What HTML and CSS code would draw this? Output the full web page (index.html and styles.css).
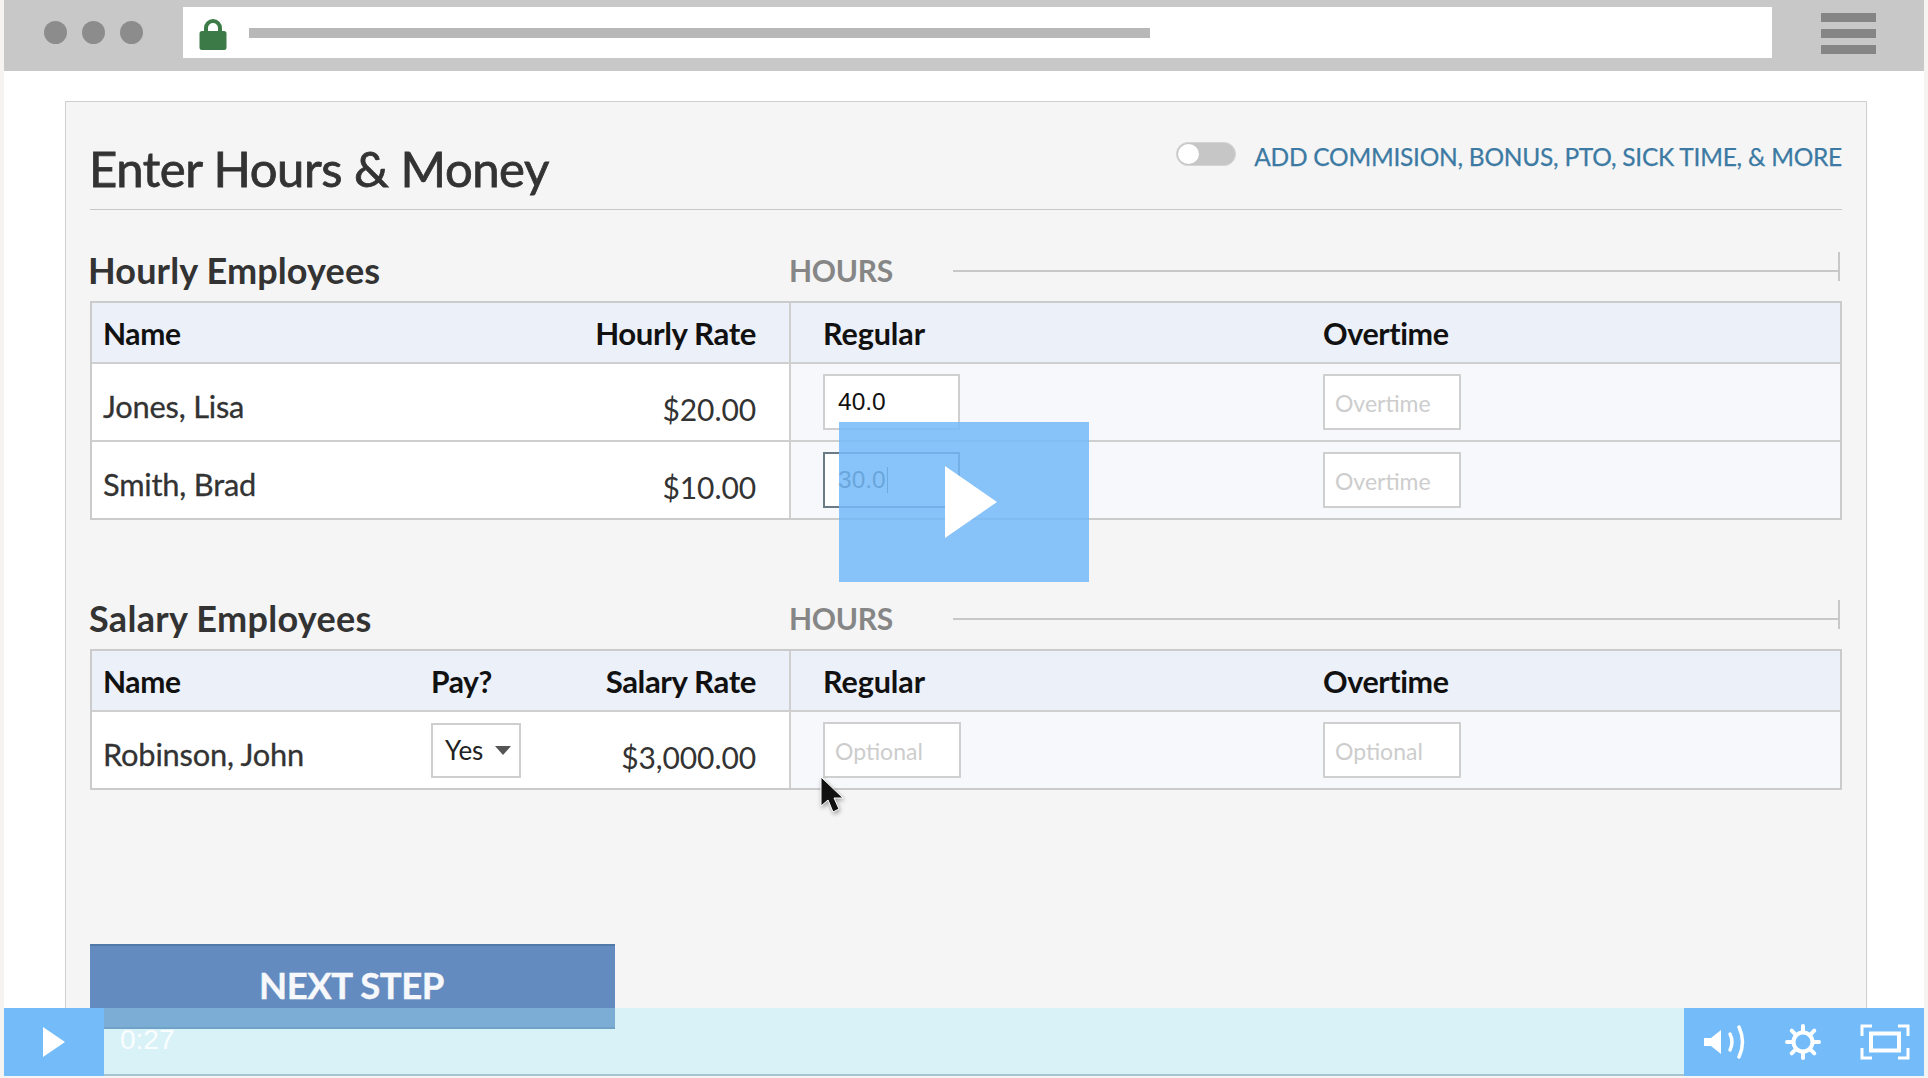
FILE: index.html
```html
<!DOCTYPE html>
<html lang="en">
<head>
<meta charset="utf-8">
<title>Enter Hours &amp; Money</title>
<link rel="stylesheet" href="styles.css">
</head>
<body>
<div class="page">
  <header class="chrome">
    <div class="dots"><span class="dot"></span><span class="dot"></span><span class="dot"></span></div>
    <div class="urlbar">
      <svg class="lock" viewBox="0 0 28 31" width="28" height="31"><path d="M7 14V9a7 7 0 0 1 14 0v5" fill="none" stroke="#3c7a47" stroke-width="4"/><rect x="0.5" y="12" width="27" height="19" rx="2.5" fill="#3c7a47"/></svg>
      <div class="urlline"></div>
    </div>
    <div class="burger"><span></span><span></span><span></span></div>
  </header>
  <main class="panel">
    <div class="titlerow">
      <h1 class="title">Enter Hours &amp; Money</h1>
      <div class="addons">
        <span class="toggle"><span class="knob"></span></span>
        <span class="addlink">ADD COMMISION, BONUS, PTO, SICK TIME, &amp; MORE</span>
      </div>
    </div>

    <section class="group group-hourly">
      <div class="grouphead">
        <h2 class="groupname">Hourly Employees</h2>
        <div class="hourslabel">HOURS</div>
        <div class="hoursline"></div>
      </div>
      <div class="table">
        <div class="row head">
          <div class="cell left hourly-left"><span>Name</span><span class="rate">Hourly Rate</span></div>
          <div class="cell right"><span class="colreg">Regular</span><span>Overtime</span></div>
        </div>
        <div class="row">
          <div class="cell left hourly-left"><span class="name">Jones, Lisa</span><span class="money">$20.00</span></div>
          <div class="cell right"><span class="colreg"><span class="input val">40.0</span></span><span class="input ph wide">Overtime</span></div>
        </div>
        <div class="row">
          <div class="cell left hourly-left"><span class="name">Smith, Brad</span><span class="money">$10.00</span></div>
          <div class="cell right"><span class="colreg"><span class="input val focus">30.0<i class="caret"></i></span></span><span class="input ph wide">Overtime</span></div>
        </div>
      </div>
    </section>

    <section class="group group-salary">
      <div class="grouphead">
        <h2 class="groupname">Salary Employees</h2>
        <div class="hourslabel">HOURS</div>
        <div class="hoursline"></div>
      </div>
      <div class="table">
        <div class="row head">
          <div class="cell left salary-left"><span>Name</span><span>Pay?</span><span class="end rate">Salary Rate</span></div>
          <div class="cell right"><span class="colreg">Regular</span><span>Overtime</span></div>
        </div>
        <div class="row">
          <div class="cell left salary-left"><span class="name">Robinson, John</span><span class="select">Yes<i class="arrow"></i></span><span class="money end">$3,000.00</span></div>
          <div class="cell right"><span class="colreg"><span class="input ph wide">Optional</span></span><span class="input ph wide">Optional</span></div>
        </div>
      </div>
    </section>

    <button class="next">NEXT STEP</button>
  </main>

  <svg class="cursor" viewBox="0 0 24 40" width="24" height="40"><path d="M1 1v29l7-6 5 12 6-3-5-11h9z" fill="#111" stroke="#fff" stroke-width="1"/></svg>

  <div class="bigplay"><svg viewBox="0 0 52 72" width="52" height="72"><path d="M0 0l52 36L0 72z" fill="#fff"/></svg></div>

  <div class="controls">
    <div class="ctl-play"><svg viewBox="0 0 22 30" width="22" height="30"><path d="M0 0l22 15L0 30z" fill="#fff"/></svg></div>
    <div class="ctl-bar"><span class="time">0:27</span></div>
    <div class="ctl-right">
      <svg viewBox="0 0 42 34" width="42" height="34"><path d="M0 13h7l10-8v24L7 21H0z" fill="#fff"/><path d="M26 9q4 8 0 16" fill="none" stroke="#fff" stroke-width="3.5" stroke-linecap="round"/><path d="M35 2q7 15 0 30" fill="none" stroke="#fff" stroke-width="3.5" stroke-linecap="round"/></svg>
      <svg viewBox="0 0 36 36" width="36" height="36"><g stroke="#fff" stroke-width="4" stroke-linecap="round"><path d="M18 2v5M18 29v5M2 18h5M29 18h5M6.7 6.7l3.5 3.5M25.8 25.8l3.5 3.5M6.7 29.3l3.5-3.5M25.8 10.2l3.5-3.5"/></g><circle cx="18" cy="18" r="9.5" fill="none" stroke="#fff" stroke-width="4"/></svg>
      <svg viewBox="0 0 50 36" width="50" height="36"><path d="M2 12V2h10M38 2h10v10M48 24v10H38M12 34H2V24" fill="none" stroke="#fff" stroke-width="3"/><rect x="11" y="9.500" width="28" height="17" fill="none" stroke="#fff" stroke-width="4"/></svg>
    </div>
  </div>
</div>
</body>
</html>
```

FILE: styles.css
```css
* { box-sizing: border-box; }
html, body { margin: 0; height: 100%; }
body { background: #f6f4f2; overflow: hidden; font-family: Lato, "Liberation Sans", sans-serif; color: #333; }
.page { position: relative; width: 1920px; height: 1076px; margin-left: 4px; background: #fff; overflow: hidden; }

.chrome { height: 71px; background: #c8c8c8; display: flex; align-items: flex-start; padding: 7px 0 0 40px; }
.dots { display: flex; gap: 15px; padding-top: 14px; width: 139px; }
.dot { width: 23px; height: 23px; border-radius: 50%; background: #8c8c8c; }
.urlbar { width: 1589px; height: 51px; background: #fff; display: flex; align-items: center; padding-left: 16px; }
.lock { margin-right: 22px; margin-top: 4px; }
.urlline { width: 901px; height: 10px; background: #b8b8b8; margin-top: 1px; }
.burger { margin: 6px 0 0 49px; width: 55px; display: flex; flex-direction: column; gap: 7px; }
.burger span { height: 9px; background: #858585; }

.panel { height: 1005px; margin: 30px 57px 0 61px; background: #f5f5f5; border: 1px solid #cfcfcf; border-bottom: 0; padding: 0 24px; position: relative; }
.titlerow { height: 108px; border-bottom: 1px solid #c8c8c8; display: flex; justify-content: space-between; align-items: flex-start; }
.title { margin: 37px 0 0 -1px; font-size: 49px; line-height: 58px; font-weight: 400; color: #333; -webkit-text-stroke: .8px #333; letter-spacing: -.45px; }
.addons { display: flex; align-items: center; gap: 18px; margin-top: 39px; }
.toggle { width: 60px; height: 24px; border-radius: 12px; background: #c6c6c6; border: 1px solid #d4d4d4; display: flex; align-items: center; padding-left: 1px; margin-top: -7px; }
.knob { width: 21px; height: 20px; border-radius: 50%; background: #fff; }
.addlink { font-size: 24.500px; line-height: 32px; color: #3c7aa3; letter-spacing: -.25px; -webkit-text-stroke: .25px #3c7aa3; }

.group-hourly { margin-top: 31px; }
.group-salary { margin-top: 69px; }
.grouphead { display: flex; align-items: center; height: 60px; position: relative; }
.groupname { margin: 0 0 2px -2px; width: 701px; font-size: 36px; line-height: 40px; font-weight: 700; color: #333; letter-spacing: .15px; }
.group-salary .groupname { margin-left: -1px; width: 700px; letter-spacing: .3px; }
.hourslabel { font-size: 30px; font-weight: 700; color: #868686; width: 164px; letter-spacing: -.3px; margin-bottom: 2px; }
.hoursline { flex: 1; height: 2px; background: #c8c8c8; margin-right: 2px; position: relative; }
.hoursline::after { content: ""; position: absolute; right: 0; top: -18px; width: 2px; height: 29px; background: #c8c8c8; }

.table { border: 2px solid #cbcbcb; background: #fff; }
.row { display: flex; height: 78px; border-top: 2px solid #cfcfcf; }
.row.head { height: 59px; border-top: 0; background: #ecf0f8; font-weight: 700; font-size: 30.500px; color: #111; letter-spacing: -.4px; }
.row.head .rate { font-size: 31.200px; }
.row.head .colreg { letter-spacing: -.1px; }
.cell { display: flex; align-items: center; }
.cell.left { width: 699px; padding: 0 33px 0 11px; border-right: 2px solid #cfcfcf; font-size: 30px; }
.row:not(.head) .cell.right { background: #f7f8fb; }
.hourly-left { justify-content: space-between; }
.salary-left { display: grid; grid-template-columns: 328px 1fr auto; }
.cell.right { flex: 1; padding-left: 32px; }
.colreg { width: 500px; display: block; }
.name { color: #333; font-size: 30.800px; letter-spacing: -.2px; -webkit-text-stroke: .3px #333; padding-top: 8px; }
.money { font-size: 30px; color: #333; padding-top: 13px; letter-spacing: -.1px; }
.end { text-align: right; }

.input { display: flex; align-items: center; width: 137px; height: 56px; background: #fff; border: 2px solid #cfcfcf; font-size: 24.500px; }
.input.wide { width: 138px; padding-left: 10px; }
.val { padding-left: 13px; color: #111; font-family: "Liberation Sans", sans-serif; padding-bottom: 1px; }
.focus { border-color: #6b7b85; color: #333; }
.ph { color: #cdcdcd; font-size: 23px; padding-top: 2px; }
.caret { width: 1.500px; height: 26px; background: #555; margin-left: 1px; }

.select { display: flex; align-items: center; justify-content: space-between; width: 90px; height: 55px; background: #fff; border: 2px solid #cfcfcf; font-size: 26px; padding: 0 8px 0 12px; color: #222; }
.arrow { width: 0; height: 0; border-left: 8px solid transparent; border-right: 8px solid transparent; border-top: 9px solid #555; }

.next { position: absolute; left: 24px; top: 842px; width: 525px; height: 85px; background: #648bbf; border: 0; border-top: 2px solid #527aa8; border-bottom: 2px solid #527aa8; color: #f6f8fb; font-family: Lato, sans-serif; font-size: 36.500px; font-weight: 700; letter-spacing: -.4px; -webkit-text-stroke: .4px #f6f8fb; padding: 0 2px 3px 0; }

.cursor { position: absolute; left: 816px; top: 776px; filter: drop-shadow(1px 2px 2px rgba(0,0,0,.35)); }
.bigplay { position: absolute; left: 835px; top: 422px; width: 250px; height: 160px; background: rgba(115,186,248,.85); display: flex; align-items: center; justify-content: center; padding-left: 14px; }

.controls { position: absolute; left: 0; top: 1008px; width: 1920px; height: 68px; display: flex; }
.ctl-play { width: 100px; background: #73bbf9; display: flex; align-items: center; padding-left: 39px; }
.ctl-bar { flex: 1; background: rgba(165,238,255,.35); border-bottom: 2px solid #a8c4d0; padding: 16px 0 0 16px; }
.time { display: block; color: rgba(255,255,255,.9); font: 300 28px/32px "Liberation Sans", sans-serif; }
.ctl-right { width: 240px; background: #73bbf9; display: flex; align-items: center; gap: 22px; padding: 0 14px 0 20px; justify-content: space-between; }
```
